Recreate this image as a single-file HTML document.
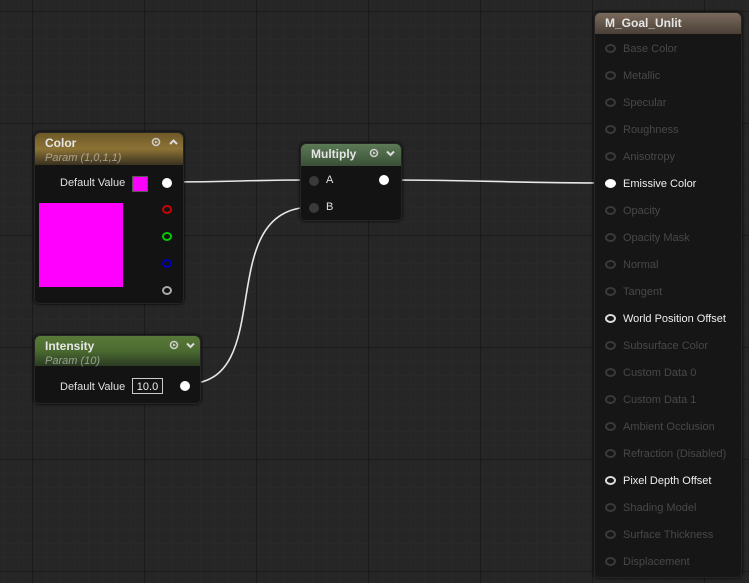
<!DOCTYPE html><html><head><style>
body{margin:0;width:749px;height:583px;overflow:hidden;background-color:#262626;
background-image:linear-gradient(90deg,#1b1b1b 1px,transparent 1px),linear-gradient(#1b1b1b 1px,transparent 1px),linear-gradient(90deg,#292929 1px,transparent 1px),linear-gradient(#292929 1px,transparent 1px);
background-size:112px 112px,112px 112px,14px 14px,14px 14px;background-position:32px 11px,32px 11px,4px 11px,4px 11px;
font-family:"Liberation Sans",sans-serif;position:relative}
.n{position:absolute;background:#131313;border-radius:5px;box-shadow:0 0 3px #000;border:1px solid #262626}
.h{border-radius:5px 5px 0 0;color:#e6e6e6;font-size:12px;font-weight:bold;padding:3px 10px}
.sub{font-weight:normal;font-style:italic;font-size:11px;opacity:.55}
.t{position:absolute;font-size:11px;color:#e0e0e0}
.p{position:absolute;width:10px;height:9px;border-radius:50%;border:2px solid #bbb;box-sizing:border-box}
.r{position:absolute;left:10px;font-size:11px;color:#484848;height:14px;line-height:14px}
.r i{display:inline-block;width:11px;height:9px;border-radius:50%;border:2px solid #3a3a3a;box-sizing:border-box;margin-right:7px;vertical-align:-1px}
.r.on{color:#eee}.r.on i{border-color:#ddd}
.ic{position:absolute}
</style></head><body>
<svg width="749" height="583" style="position:absolute;left:0;top:0">
<g fill="none" stroke="#e8e8e8" stroke-width="1.6">
<path d="M170 182 C240 182,240 180,312 180"/>
<path d="M386 180 C490 180,500 183,610 183"/>
<path d="M186 384 C280 384,210 207,313 207"/>
</g></svg>

<div class="n" style="left:34px;top:132px;width:148px;height:170px">
<div class="h" style="height:26px;background:linear-gradient(180deg,#6e5a28,#8c7235 50%,#3a3220)">Color<br><span class="sub">Param (1,0,1,1)</span></div>
<svg class="ic" style="left:116px;top:4px" width="30" height="12"><circle cx="5" cy="5" r="3.5" fill="none" stroke="#ccc" stroke-width="1.6"/><path d="M4 3.5L7 5L4 6.5Z" fill="#ccc"/><path d="M19 7L22.5 3.5L26 7" fill="none" stroke="#ddd" stroke-width="2"/></svg>
<div class="t" style="left:25px;top:44px">Default Value</div>
<div style="position:absolute;left:97px;top:43px;width:14px;height:14px;background:#f0f;border:1px solid #555"></div>
<div style="position:absolute;left:127px;top:45px;width:10px;height:10px;border-radius:50%;background:#fff"></div>
<div style="position:absolute;left:4px;top:70px;width:84px;height:84px;background:#f0f"></div>
<div class="p" style="left:127px;top:72px;border-color:#c00"></div>
<div class="p" style="left:127px;top:99px;border-color:#0c0"></div>
<div class="p" style="left:127px;top:126px;border-color:#00b"></div>
<div class="p" style="left:127px;top:153px;border-color:#aaa"></div>
</div>

<div class="n" style="left:300px;top:143px;width:100px;height:76px">
<div class="h" style="height:16px;background:linear-gradient(180deg,#5c7a55,#3a4f37)">Multiply</div>
<svg class="ic" style="left:68px;top:4px" width="30" height="12"><circle cx="5" cy="5" r="3.5" fill="none" stroke="#ccc" stroke-width="1.6"/><path d="M4 3.5L7 5L4 6.5Z" fill="#ccc"/><path d="M18 3.5L21.5 7L25 3.5" fill="none" stroke="#ddd" stroke-width="2"/></svg>
<div style="position:absolute;left:8px;top:32px;width:10px;height:10px;border-radius:50%;background:#3a3a3a"></div>
<div class="t" style="left:25px;top:30px">A</div>
<div style="position:absolute;left:8px;top:59px;width:10px;height:10px;border-radius:50%;background:#3a3a3a"></div>
<div class="t" style="left:25px;top:57px">B</div>
<div style="position:absolute;left:78px;top:31px;width:10px;height:10px;border-radius:50%;background:#fff"></div>
</div>

<div class="n" style="left:34px;top:335px;width:165px;height:67px">
<div class="h" style="height:24px;background:linear-gradient(180deg,#5a7a3a,#4a6a30 50%,#2b3a22)">Intensity<br><span class="sub">Param (10)</span></div>
<svg class="ic" style="left:134px;top:4px" width="30" height="12"><circle cx="5" cy="5" r="3.5" fill="none" stroke="#ccc" stroke-width="1.6"/><path d="M4 3.5L7 5L4 6.5Z" fill="#ccc"/><path d="M18 3.5L21.5 7L25 3.5" fill="none" stroke="#ddd" stroke-width="2"/></svg>
<div class="t" style="left:25px;top:45px">Default Value</div>
<div style="position:absolute;left:97px;top:42px;width:31px;height:16px;border:1px solid #ccc;color:#eee;font-size:11px;line-height:16px;text-align:center;box-sizing:border-box">10.0</div>
<div style="position:absolute;left:145px;top:45px;width:10px;height:10px;border-radius:50%;background:#fff"></div>
</div>

<div class="n" style="left:594px;top:12px;width:146px;height:564px;background:#161616">
<div class="h" style="height:15px;padding-top:3px;background:linear-gradient(180deg,#7a6a5c,#4a4038)">M_Goal_Unlit</div>
<div class="r" style="top:29px"><i></i>Base Color</div>
<div class="r" style="top:56px"><i></i>Metallic</div>
<div class="r" style="top:83px"><i></i>Specular</div>
<div class="r" style="top:110px"><i></i>Roughness</div>
<div class="r" style="top:137px"><i></i>Anisotropy</div>
<div class="r on" style="top:164px"><i style="background:#fff;border-color:#fff"></i>Emissive Color</div>
<div class="r" style="top:191px"><i></i>Opacity</div>
<div class="r" style="top:218px"><i></i>Opacity Mask</div>
<div class="r" style="top:245px"><i></i>Normal</div>
<div class="r" style="top:272px"><i></i>Tangent</div>
<div class="r on" style="top:299px"><i></i>World Position Offset</div>
<div class="r" style="top:326px"><i></i>Subsurface Color</div>
<div class="r" style="top:353px"><i></i>Custom Data 0</div>
<div class="r" style="top:380px"><i></i>Custom Data 1</div>
<div class="r" style="top:407px"><i></i>Ambient Occlusion</div>
<div class="r" style="top:434px"><i></i>Refraction (Disabled)</div>
<div class="r on" style="top:461px"><i></i>Pixel Depth Offset</div>
<div class="r" style="top:488px"><i></i>Shading Model</div>
<div class="r" style="top:515px"><i></i>Surface Thickness</div>
<div class="r" style="top:542px"><i></i>Displacement</div>
</div>
</body></html>
